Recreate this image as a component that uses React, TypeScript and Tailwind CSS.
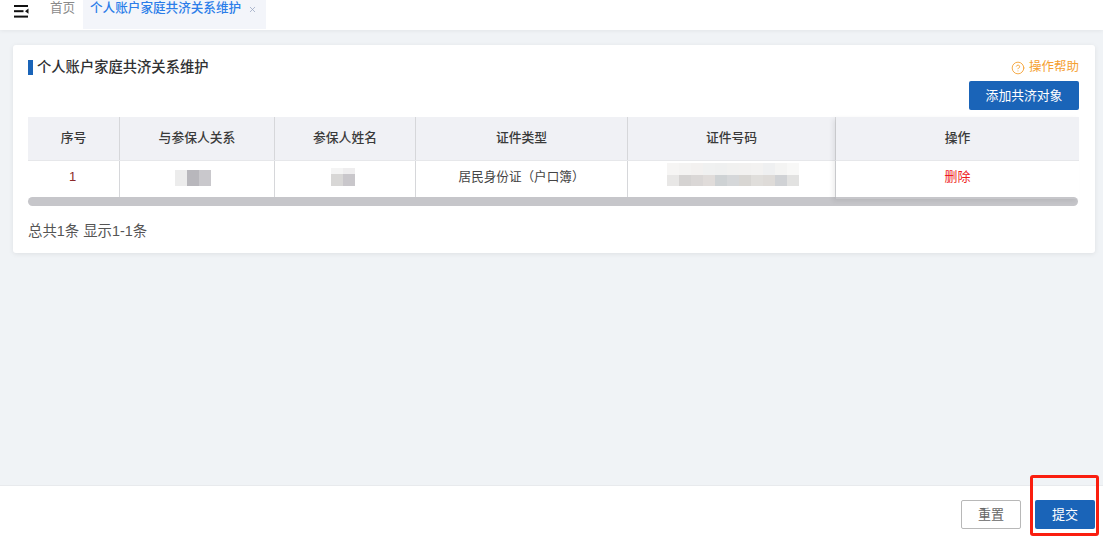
import { CircleHelp, X } from 'lucide-react'

const font = { fontFamily: '"Liberation Sans", "Noto Sans CJK SC", sans-serif' }

function Blocks({ rows }: { rows: { h: string; colors: string[] }[] }) {
  return (
    <div className="flex flex-col">
      {rows.map((row, i) => (
        <div key={i} className="flex">
          {row.colors.map((c, j) => (
            <div key={j} className={`w-3 ${row.h}`} style={{ background: c }} />
          ))}
        </div>
      ))}
    </div>
  )
}

function MenuIcon() {
  return (
    <svg width="15" height="13" viewBox="0 0 15 13" className="block">
      <rect x="0" y="0" width="14" height="2" fill="#111" />
      <rect x="0" y="5.2" width="9.5" height="2" fill="#111" />
      <path d="M14.5 3.6v5.2L11 6.2z" fill="#111" />
      <rect x="0" y="10.6" width="14" height="2" fill="#111" />
    </svg>
  )
}

const cols = 'grid grid-cols-[92px_155px_141px_212px_208px_243px]'
const headers = ['序号', '与参保人关系', '参保人姓名', '证件类型', '证件号码']

export default function App() {
  return (
    <div className="relative h-[539px] w-[1103px] overflow-hidden flex flex-col bg-[#f0f3f6]" style={font}>
      <div className="h-[30px] bg-white flex items-start shadow-[0_1px_4px_rgba(0,0,0,0.06)] z-10">
        <div className="pl-[14px] pt-[5px] w-[50px]">
          <MenuIcon />
        </div>
        <div className="w-[33px] h-[16px] flex items-center text-[12.6px] leading-[16px] text-[#8a8a8a]">首页</div>
        <div className="h-[29px] w-[183px] bg-[#f3f5fa] pl-[7px] flex items-start gap-[7px]">
          <span className="text-[12.6px] leading-[16px] font-medium text-[#2b7de9]">个人账户家庭共济关系维护</span>
          <X size={9} className="mt-[5px] text-[#9aa5c0]" />
        </div>
      </div>

      <div className="flex-1 pt-[15px] pl-[13px] pr-[8px]">
        <div className="h-[208px] bg-white rounded-[3px] shadow-[0_1px_5px_rgba(0,0,0,0.08)] pt-[15px] px-[15px]">
          <div className="flex justify-between h-[15px] items-center">
            <div className="flex items-center gap-[4px]">
              <div className="w-[5px] h-[15px] bg-[#1a64b8]" />
              <span className="text-[14.3px] leading-[15px] font-medium text-[#303133]">个人账户家庭共济关系维护</span>
            </div>
            <div className="flex items-center gap-[4px] pr-[1px] text-[#f5a030] text-[12.5px] leading-[15px]">
              <CircleHelp size={14} strokeWidth={1.5} />
              <span>操作帮助</span>
            </div>
          </div>
          <div className="flex justify-end mt-[6px] pr-[1px]">
            <button className="w-[110px] h-[29px] bg-[#1a64b8] rounded-[2px] text-white text-[12.8px]">添加共济对象</button>
          </div>
          <div className="mt-[7px] relative w-[1051px]">
            <div className={`${cols} h-[44px] bg-[#f0f1f5] border-b border-[#e6e7ea]`}>
              {headers.map((h) => (
                <div key={h} className="flex items-center justify-center pb-[2px] border-r border-[#d6d7da] text-[12.8px] font-medium text-[#3a3a3a]">
                  {h}
                </div>
              ))}
              <div className="flex items-center justify-center pb-[2px] text-[12.8px] font-medium text-[#3a3a3a]">操作</div>
            </div>
            <div className={`${cols} h-[36px]`}>
              <div className="flex items-center justify-center pb-[4px] pr-[2px] border-r border-[#d6d7da] text-[13px] text-[#8b2a2a]">1</div>
              <div className="flex justify-center pt-[9px] pr-[8px] border-r border-[#d6d7da]">
                <Blocks rows={[{ h: 'h-[16px]', colors: ['#ececec', '#b8b7bc', '#c9c8cc'] }]} />
              </div>
              <div className="flex justify-center pt-[7px] pr-[4px] border-r border-[#d6d7da]">
                <Blocks
                  rows={[
                    { h: 'h-[6px]', colors: ['#f4f4f4', '#eeedee'] },
                    { h: 'h-[12px]', colors: ['#d8d7d6', '#c9c7cb'] },
                  ]}
                />
              </div>
              <div className="flex items-center justify-center pb-[4px] border-r border-[#d6d7da] text-[12.6px] text-[#444]">居民身份证（户口簿）</div>
              <div className="flex justify-center pt-[2px] pl-[2px] border-r border-[#d6d7da]">
                <Blocks
                  rows={[
                    { h: 'h-[12px]', colors: ['#f6f5f4', '#f4f3f2', '#f3f1f0', '#f0f1f1', '#eff0f0', '#f1f1f0', '#f2f1f0', '#f3f2f1', '#eff0f1', '#f4f4f3', '#f8f8f7'] },
                    { h: 'h-[11px]', colors: ['#e8e7e6', '#d5d3d2', '#dad7d6', '#e0dcda', '#ced2d4', '#d5d7d9', '#d8d6d3', '#e0dedb', '#dedbd8', '#d0d2d5', '#e2e2e1'] },
                  ]}
                />
              </div>
              <div className="flex items-center justify-center pb-[4px] text-[13px] text-[#ee1c1c]">删除</div>
            </div>
            <div className="h-[9px] w-[1050px] bg-[#c6c6ca] rounded-[5px]" />
            <div className="absolute left-[808px] top-0 w-[243px] h-[82px] shadow-[-3px_2px_5px_rgba(0,0,0,0.08)] pointer-events-none" />
          </div>
          <div className="mt-[16px] text-[14.4px] leading-[18px] text-[#555]">总共1条 显示1-1条</div>
        </div>
      </div>

      <div className="h-[54px] bg-white border-t border-[#e8eaed] flex justify-end gap-[14px] pt-[14px] pr-[8px]">
        <button className="w-[60px] h-[29px] border border-[#b8b8b8] rounded-[2px] bg-white text-[13px] text-[#666]">重置</button>
        <button className="w-[60px] h-[29px] bg-[#1a64b8] rounded-[2px] text-white text-[13px]">提交</button>
      </div>

      <div className="absolute left-[1030px] top-[475px] w-[69px] h-[61px] border-[3px] border-[#fa1e0f] rounded-[3px] pointer-events-none" />
    </div>
  )
}
